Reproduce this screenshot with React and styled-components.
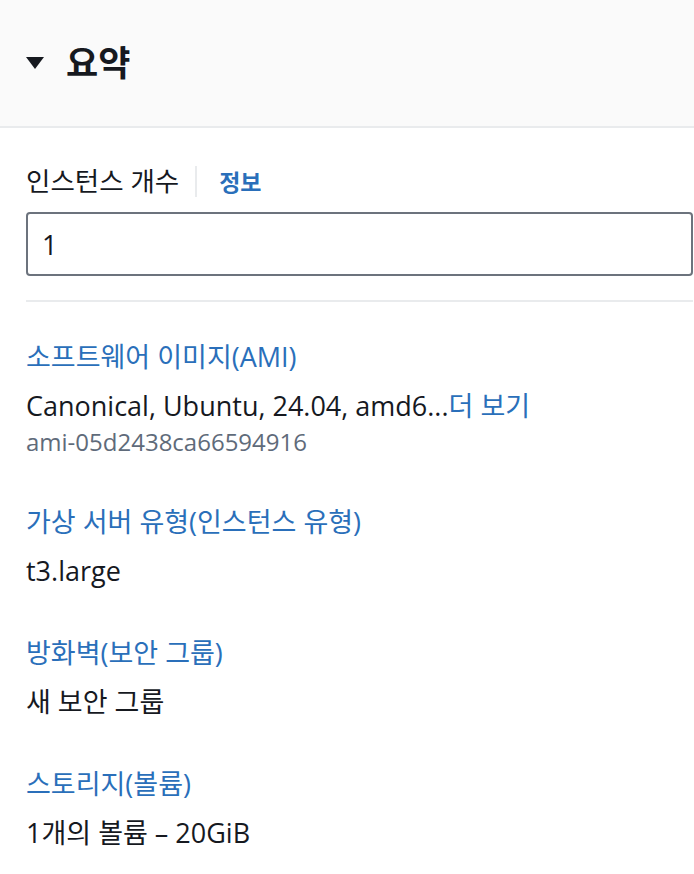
import styled, { createGlobalStyle } from "styled-components";

const GlobalStyle = createGlobalStyle`
  body {
    margin: 0;
    background: #ffffff;
    font-family: "Open Sans", "Noto Sans CJK KR", sans-serif;
    color: #16191f;
  }
`;

const Panel = styled.div`
  width: 694px;
  overflow: hidden;
`;

const Header = styled.div`
  height: 126px;
  background: #fafafa;
  border-bottom: 2px solid #e9ebed;
  display: flex;
  align-items: center;
  gap: 22px;
  padding-left: 26px;
  box-sizing: content-box;
`;

const Title = styled.h2`
  margin: 0;
  font-size: 35px;
  font-weight: 700;
  line-height: 44px;
  color: #16191f;
`;

const Body = styled.div`
  padding: 37px 1px 40px 26px;
`;

const LabelRow = styled.div`
  display: flex;
  align-items: center;
  height: 32px;
`;

const FieldLabel = styled.span`
  font-size: 26.5px;
  line-height: 32px;
  color: #16191f;
`;

const Split = styled.span`
  width: 2px;
  height: 31px;
  background: #e9ebed;
  margin: 0 22px 0 16px;
`;

const InfoLink = styled.a`
  font-size: 23px;
  font-weight: 700;
  color: #2a6fba;
  text-decoration: none;
`;

const Input = styled.input`
  display: block;
  box-sizing: border-box;
  width: 100%;
  height: 64px;
  margin-top: 15px;
  padding: 0 14px;
  border: 2px solid #6c737d;
  border-radius: 4px;
  font-family: inherit;
  font-size: 27px;
  color: #16191f;
  background: #fff;
  outline: none;
`;

const Divider = styled.hr`
  border: none;
  height: 2px;
  background: #e9ebed;
  margin: 24px 0 39px;
`;

const List = styled.div`
  display: flex;
  flex-direction: column;
  gap: 50px;
`;

const Item = styled.div`
  display: flex;
  flex-direction: column;
`;

const ItemLabel = styled.a`
  font-size: 27px;
  line-height: 32px;
  color: #2a6fba;
  text-decoration: none;
  white-space: nowrap;
`;

const Value = styled.div`
  margin-top: 17px;
  font-size: 27px;
  line-height: 32px;
  color: #16191f;
  white-space: nowrap;
`;

const More = styled.a`
  color: #2a6fba;
  text-decoration: none;
`;

const Sub = styled.div`
  margin-top: 6px;
  font-size: 24px;
  line-height: 28px;
  color: #5f6b7a;
`;

const Caret = () => (
  <svg width="18" height="14" viewBox="0 0 18 14">
    <polygon points="0,1 18,1 9,13" fill="#16191f" />
  </svg>
);

const items = [
  {
    label: "소프트웨어 이미지(AMI)",
    value: (
      <>
        Canonical, Ubuntu, 24.04, amd6...<More href="#">더 보기</More>
      </>
    ),
    sub: "ami-05d2438ca66594916",
  },
  { label: "가상 서버 유형(인스턴스 유형)", value: "t3.large" },
  { label: "방화벽(보안 그룹)", value: "새 보안 그룹" },
  { label: "스토리지(볼륨)", value: "1개의 볼륨 – 20GiB" },
];

export default function App() {
  return (
    <>
      <GlobalStyle />
      <Panel>
        <Header>
          <Caret />
          <Title>요약</Title>
        </Header>
        <Body>
          <LabelRow>
            <FieldLabel>인스턴스 개수</FieldLabel>
            <Split />
            <InfoLink href="#">정보</InfoLink>
          </LabelRow>
          <Input type="text" defaultValue="1" />
          <Divider />
          <List>
            {items.map((it) => (
              <Item key={it.label}>
                <ItemLabel href="#">{it.label}</ItemLabel>
                <Value>{it.value}</Value>
                {it.sub && <Sub>{it.sub}</Sub>}
              </Item>
            ))}
          </List>
        </Body>
      </Panel>
    </>
  );
}
